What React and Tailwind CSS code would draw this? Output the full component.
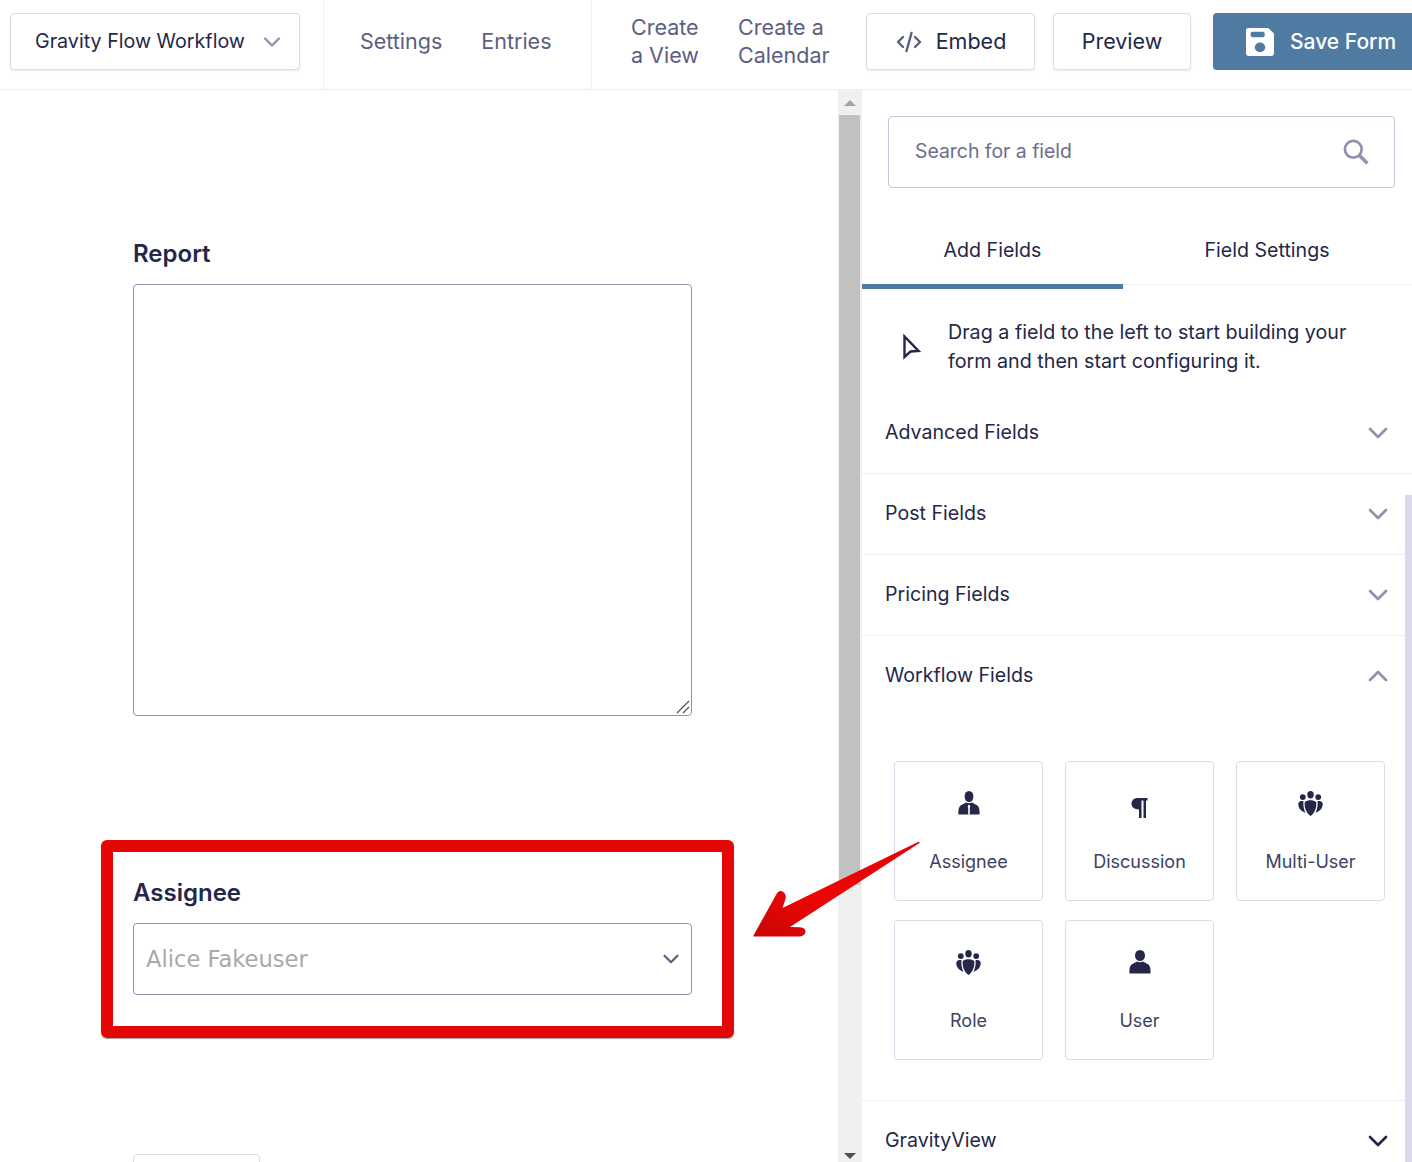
import React from 'react';
import { ChevronDown, ChevronUp } from 'lucide-react';

const TopButton = ({ children, className = '' }) => (
  <button className={`h-[57px] flex items-center justify-center rounded-[4px] border border-[#dcdbe9] bg-white text-[21.5px] text-[#242748] shadow-[0_1px_2px_rgba(36,39,72,0.1)] ${className}`}>
    {children}
  </button>
);

const NavLink = ({ children, className = '' }) => (
  <span className={`text-[21.5px] leading-[28px] text-[#5b5e80] whitespace-nowrap ${className}`}>{children}</span>
);

const Person = ({ tie }) => (
  <svg width="22" height="24" viewBox="0 0 22 24" fill="#242748">
    <ellipse cx="11" cy="5.500" rx={tie ? 4.400 : 5} ry="5.500" />
    <path d="M.5 23.500c-.4-5 .4-8.500 3.500-9.700L8 11.500c1.800 1 4.200 1 6 0l4 2.300c3.100 1.200 3.900 4.700 3.500 9.700z" />
    {tie && <path d="M10.200 14h1.600l.5 1.800-.5 1v6.700h-1.600v-6.700l-.5-1z" fill="#fff" />}
  </svg>
);

const Group = () => (
  <svg width="25" height="25" viewBox="0 0 24 24" fill="#242748">
    <ellipse cx="12" cy="3.600" rx="3.100" ry="3.500" />
    <circle cx="4.600" cy="5.800" r="2.800" />
    <circle cx="19.400" cy="5.800" r="2.800" />
    <path d="M6.500 10.500C9.500 8.300 14.500 8.300 17.500 10.500c.6 5-1.200 10.500-5.500 13.500-4.300-3-6.100-8.500-5.500-13.500z" />
    <path d="M.4 11.500c1-1.700 3-2.200 4.900-1.700-.5 3.800.2 7.500 1.900 11.200C3.400 19.900-.4 16.500.4 11.500z" />
    <path d="M23.600 11.500c-1-1.700-3-2.200-4.900-1.700.5 3.800-.2 7.500-1.900 11.200 3.800-1.100 7.600-4.500 6.800-9.500z" />
  </svg>
);

const Pilcrow = () => (
  <svg className="mt-[7px]" width="17" height="20" viewBox="0 0 17 20" fill="#242748">
    <path d="M6.500 0H16.500V2.500H15V20H12.500V2.500H10.500V20H8V11.500C3.500 11.500.5 9.300.5 5.800.5 2.300 3 0 6.500 0z" />
  </svg>
);

const Tile = ({ icon, label }) => (
  <div className="h-[140px] rounded-[4px] border border-[#dcdbe9] flex flex-col items-center bg-white">
    <div className="h-[24px] mt-[29px] flex items-start justify-center">{icon}</div>
    <span className="mt-[35px] text-[18px] leading-[24px] text-[#3e4163]">{label}</span>
  </div>
);

const AccordionRow = ({ label, open, dark, border = true }) => (
  <div className={`h-[81px] pl-[23px] pr-[18px] flex items-center justify-between shrink-0 ${border ? 'pb-[1px] border-b border-[#eeeef6]' : 'pb-[2px]'}`}>
    <span className="text-[19.6px] text-[#242748]">{label}</span>
    {open ? (
      <ChevronUp size={32} strokeWidth={2} className="text-[#8f91ae]" />
    ) : (
      <ChevronDown size={32} strokeWidth={2} className={dark ? 'text-[#242748]' : 'text-[#8f91ae]'} />
    )}
  </div>
);

export default function App() {
  return (
    <div className="relative w-[1412px] h-[1162px] overflow-hidden bg-white font-['Inter',sans-serif]">
      <header className="h-[90px] flex border-b border-[#eeeef6]">
        <div className="w-[324px] shrink-0 pl-[10px] pb-[6px] flex items-center border-r border-[#eeeef6]">
          <TopButton className="w-[290px] pl-[24px] pr-[13px] !justify-between">
            <span className="text-[19.7px]">Gravity Flow Workflow</span>
            <ChevronDown size={28} strokeWidth={2} className="text-[#8f91ae]" />
          </TopButton>
        </div>
        <div className="w-[268px] shrink-0 pl-[36px] pb-[8px] flex items-center gap-[39px] border-r border-[#eeeef6]">
          <NavLink>Settings</NavLink>
          <NavLink>Entries</NavLink>
        </div>
        <div className="w-[274px] shrink-0 pl-[39px] pb-[8px] flex items-center gap-[40px]">
          <NavLink className="w-[67px]">Create<br />a View</NavLink>
          <NavLink className="w-[92px]">Create a<br />Calendar</NavLink>
        </div>
        <div className="flex items-center pb-[6px]">
          <TopButton className="w-[169px] gap-[14px] pl-[1px]">
            <svg width="26" height="22" viewBox="0 0 26 22" fill="none" stroke="#5b5e80" strokeWidth="2.400" strokeLinecap="round" strokeLinejoin="round">
              <path d="M7 6l-5 5 5 5M19 6l5 5-5 5M15.500 2l-5 18" />
            </svg>
            Embed
          </TopButton>
          <TopButton className="w-[138px] ml-[18px]">Preview</TopButton>
          <button className="w-[215px] h-[57px] ml-[22px] pl-[33px] flex items-center gap-[16px] rounded-l-[4px] bg-[#4f7aa2] text-[21px] font-medium text-white">
            <svg width="28" height="28" viewBox="1 1 24 26" preserveAspectRatio="none">
              <path fillRule="evenodd" fill="#fff" d="M3 1h17l5 5v19a2 2 0 0 1-2 2H3a2 2 0 0 1-2-2V3a2 2 0 0 1 2-2zm3.500 3.500a1.500 1.500 0 0 0-1.500 1.500v2a1.500 1.500 0 0 0 1.500 1.500h9A1.500 1.500 0 0 0 17 8V6a1.500 1.500 0 0 0-1.500-1.500zM13 14.500a4.500 4.500 0 1 0 0 9 4.500 4.500 0 0 0 0-9z" />
            </svg>
            Save Form
          </button>
        </div>
      </header>

      <div className="flex h-[1072px]">
        <main className="w-[838px] shrink-0 pl-[133px] pt-[149px]">
          <div className="w-[559px]">
            <label className="block text-[24px] leading-[30px] font-semibold text-[#242748]">Report</label>
            <div className="relative mt-[15px] h-[432px] rounded-[4px] border border-[#9092b2] bg-white">
              <svg className="absolute right-[1px] bottom-[1px]" width="14" height="14" viewBox="0 0 14 14" stroke="#555" strokeWidth="1.300">
                <path d="M1 13L13 1M7 13l6-6" />
              </svg>
            </div>
            <label className="block mt-[162px] text-[24px] leading-[30px] font-semibold text-[#242748]">Assignee</label>
            <div className="mt-[15px] h-[72px] pl-[12px] pr-[7px] flex items-center justify-between rounded-[4px] border border-[#9092b2] bg-white">
              <span className="mt-[1px] font-['DejaVu_Sans',sans-serif] text-[22.6px] text-[#a9a9ad]">Alice Fakeuser</span>
              <ChevronDown size={26} strokeWidth={2} className="text-[#5b5e80]" />
            </div>
            <div className="mt-[159px] w-[127px] h-[20px] rounded-t-[4px] border border-[#dcdbe9]" />
          </div>
        </main>

        <div className="w-[24px] shrink-0 bg-[#f0f0f0] flex flex-col items-center">
          <div className="h-[25px] w-full flex items-center justify-center pr-[1px]">
            <div className="w-0 h-0 border-x-[6px] border-x-transparent border-b-[6px] border-b-[#a3a3a3]" />
          </div>
          <div className="w-[21px] mr-[2px] h-[770px] bg-[#c1c1c1]" />
          <div className="flex-1" />
          <div className="w-0 h-0 mb-[3px] mr-[1px] border-x-[6px] border-x-transparent border-t-[6px] border-t-[#505050]" />
        </div>

        <aside className="relative flex-1 min-w-0 flex flex-col">
          <div className="ml-[26px] mt-[26px] w-[507px] h-[72px] shrink-0 pl-[26px] pr-[25px] flex items-center justify-between rounded-[4px] border border-[#c5c6dc]">
            <span className="text-[19.4px] text-[#6b6e8f]">Search for a field</span>
            <svg width="26" height="26" viewBox="0 0 24 24" fill="none" stroke="#8f91ae" className="-mt-[1px]">
              <circle cx="9.500" cy="9.500" r="7.700" strokeWidth="2.500" />
              <path d="M15 15l7.500 7.500" strokeWidth="3.200" />
            </svg>
          </div>
          <div className="mt-[27px] h-[70px] shrink-0 flex items-start border-b border-[#eeeef6]">
            <div className="w-[261px] h-[74px] pt-[2px] flex items-center justify-center border-b-[5px] border-[#4f7aa2] text-[19.6px] text-[#242748]">Add Fields</div>
            <div className="w-[289px] h-[69px] pt-[2px] pr-[1px] flex items-center justify-center text-[19.6px] text-[#242748]">Field Settings</div>
          </div>
          <div className="h-[107px] shrink-0 pl-[39px] pt-[34px] flex items-start gap-[27px]">
            <svg className="mt-[14px] shrink-0" width="20" height="28" viewBox="0 0 20 28" fill="none" stroke="#242748" strokeWidth="2.400" strokeLinejoin="miter">
              <path d="M3.500 3.500V24l6-5.500 8-.5z" />
            </svg>
            <p className="text-[19.7px] leading-[29px] text-[#242748] -mt-[1px]">
              Drag a field to the left to start building your<br />form and then start configuring it.
            </p>
          </div>
          <div className="mt-[1px] flex flex-col">
            <AccordionRow label="Advanced Fields" />
            <AccordionRow label="Post Fields" />
            <AccordionRow label="Pricing Fields" />
            <AccordionRow label="Workflow Fields" open border={false} />
            <div className="pl-[32px] pr-[27px] pt-[44px] pb-[40px] grid grid-cols-3 gap-x-[22px] gap-y-[19px] border-b border-[#eeeef6]">
              <Tile icon={<Person tie />} label="Assignee" />
              <Tile icon={<Pilcrow />} label="Discussion" />
              <Tile icon={<Group />} label="Multi-User" />
              <Tile icon={<Group />} label="Role" />
              <Tile icon={<Person />} label="User" />
            </div>
            <AccordionRow label="GravityView" dark border={false} />
          </div>
          <div className="absolute right-0 top-[405px] bottom-0 w-[7px] bg-[#d9d9ea]" />
        </aside>
      </div>

      {/* annotation drawn on top of the screenshot */}
      <div className="absolute left-[101px] top-[840px] w-[633px] h-[198px] rounded-[6px] border-[12px] border-[#e50606] shadow-[0_1px_1px_rgba(60,60,60,0.5)]" />
      <svg className="absolute left-[750px] top-[838px]" width="172" height="104" viewBox="0 0 172 104">
        <defs>
          <linearGradient id="arrow-red" x1="0" y1="1" x2="1" y2="0">
            <stop offset="0" stopColor="#c80606" />
            <stop offset="0.4" stopColor="#ee0606" />
            <stop offset="1" stopColor="#e00505" />
          </linearGradient>
        </defs>
        <path
          fill="url(#arrow-red)"
          d="M169.500 5C170 4 169 3.600 168 4L32.500 70 35.500 61C37 56 33 52.500 30 53 28 53.500 27 55 26 57L3.500 97.500C3 98 3.500 98.500 4.500 98.500H49C53 98.500 55.500 96 55.500 93.500 55.500 91 53 89.500 50 89.300L40 89z"
        />
      </svg>
    </div>
  );
}
